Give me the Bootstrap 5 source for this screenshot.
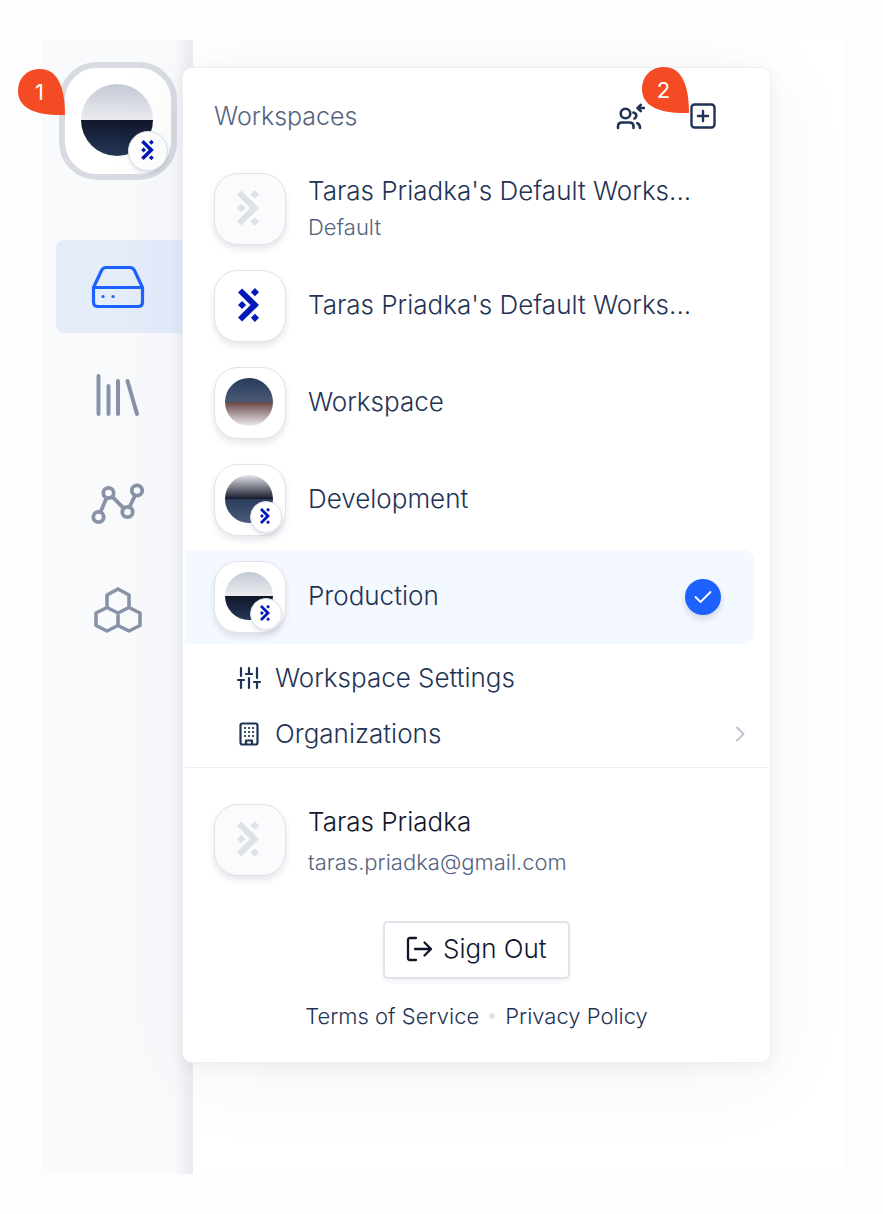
<!DOCTYPE html>
<html lang="en">
<head>
<meta charset="utf-8">
<meta name="viewport" content="width=device-width, initial-scale=1">
<title>Workspaces</title>
<link href="https://cdn.jsdelivr.net/npm/bootstrap@5.3.0/dist/css/bootstrap.min.css" rel="stylesheet">
<style>
  :root { --navy: #1f3354; --ink: #11152a; --slate: #55637f; --line: #e1e3ea; --blue: #1d62fe; --logo: #0519b8; }
  body { background: #fdfdfd; font-family: Inter, "Liberation Sans", sans-serif; color: var(--navy); font-size: 26px; line-height: 32px; font-weight: 300; }
  .stage { margin: 40px 38px 40px 42px; min-height: calc(100vh - 80px); background: #fff; overflow: hidden; }
  .rail { width: 151px; flex: none; background: linear-gradient(90deg, transparent 88%, #e9ebef), #f9fafc; padding: 22px 0 0 14px; }
  .rail-link { display: flex; align-items: center; height: 93px; padding-left: 32px; margin-bottom: 15px; color: #8993a7; border-radius: 8px 0 0 8px; }
  .rail-link.active { background: #e5edfb; color: var(--blue); }
  .current { width: 118px; height: 118px; margin: 0 0 60px 3px; padding: 0; border: 6px solid #d8dce2; border-radius: 38px; background: #fff; position: relative; display: flex; align-items: center; justify-content: center; }
  .pin { position: absolute; z-index: 3; width: 47px; height: 46px; padding-right: 4px; color: #fff; font-size: 22px; font-weight: 400; line-height: 46px; text-align: center; }
  .pin-shape { position: absolute; inset: 0; }
  .pin span { position: relative; }
  .pin-one { left: 18px; top: 69px; }
  .pin-two { right: 81px; top: -1px; }
  .menu { position: relative; z-index: 2; flex: 0 1 589px; min-width: 0; margin: 27px 0 110px -11px; align-self: flex-start; background: #fff; border: 1px solid #eceef1; border-radius: 10px; box-shadow: 0 12px 90px rgba(30,50,80,.06), 0 4px 16px rgba(30,50,80,.05); }
  .menu-head { height: 94px; padding: 2px 54px 0 31px; color: var(--slate); font-size: 25px; position: relative; }
  .icon-btn { background: none; border: 0; padding: 0; color: var(--navy); display: flex; }
  .icon-pair { gap: 45px; }
  .list { display: grid; gap: 3px; padding: 0 16px 0 2px; }
  .space { display: flex; align-items: center; gap: 22px; width: 100%; height: 94px; padding: 0 33px 0 29px; border: 0; background: none; color: inherit; font-weight: inherit; text-align: left; border-radius: 0 10px 10px 0; }
  .space.active { background: #f4f8ff; }
  .label { flex: 1; min-width: 0; padding-bottom: 2px; }
  .caption { font-size: 22px; line-height: 28px; color: var(--slate); }
  .two-line { display: grid; gap: 6px; }
  .tile { position: relative; flex: none; width: 72px; height: 72px; border: 1px solid var(--line); border-radius: 24px; background: #fff; box-shadow: 0 4px 6px rgba(40,55,90,.12); display: flex; align-items: center; justify-content: center; color: var(--logo); }
  .tile > svg { margin: 0 4px 2px 0; }
  .tile.blank { background: #fafbfd; color: #dee1e6; }
  .disc { width: 48px; height: 48px; border-radius: 50%; margin: 0 2px 2px 0; }
  .disc-big { width: 72px; height: 72px; }
  .disc-prod { background: linear-gradient(#c3c9d5, #ececf0 50%, #11172a 50%, #243757); }
  .disc-dev { background: linear-gradient(#e4e4e9, #141829 50%, #2a3d5d 50%, #4b5c7b); }
  .disc-work { background: linear-gradient(#283b5a, #4a5875 50%, #674642 50%, #eeedf2); }
  .mini { position: absolute; right: 3px; bottom: 2px; width: 32px; height: 32px; border: 1px solid var(--line); border-radius: 50%; background: #fff; color: var(--logo); display: flex; align-items: center; justify-content: center; box-shadow: 0 2px 4px rgba(40,55,90,.15); padding: 0 2px 2px 0; }
  .mini-big { width: 40px; height: 40px; bottom: 3px; }
  .tick { width: 36px; height: 36px; border-radius: 50%; background: var(--blue); color: #fff; display: flex; align-items: center; justify-content: center; box-shadow: 0 4px 6px rgba(30,50,80,.16); }
  .tools { padding: 6px 0 5px; border-bottom: 1px solid #ebedf0; margin: 0 2px; }
  .tool { display: flex; align-items: center; gap: 13px; height: 56px; padding: 0 22px 0 51px; color: var(--navy); text-decoration: none; }
  .profile { gap: 22px; padding: 36px 31px 0; color: var(--ink); }
  .profile-text { display: grid; gap: 10px; padding-top: 2px; }
  .signout { display: flex; align-items: center; gap: 10px; width: 187px; height: 58px; margin: 45px auto 21px; padding: 0 0 2px 20px; font-size: 26px; font-weight: inherit; line-height: 32px; color: var(--ink); background: #fff; border: 2px solid var(--line); border-radius: 5px; box-shadow: 0 3px 4px rgba(40,55,90,.06); }
  .legal { font-size: 22px; line-height: 32px; gap: 10px; padding-bottom: 30px; }
  .legal a { color: var(--navy); text-decoration: none; }
  .dot { width: 6px; height: 6px; border-radius: 50%; background: var(--line); }
  svg { flex: none; fill: none; stroke: currentColor; stroke-linecap: round; stroke-linejoin: round; }
  svg.solid { fill: currentColor; stroke: none; }
</style>
</head>
<body>
<svg width="0" height="0" class="position-absolute" aria-hidden="true">
  <symbol id="logo" viewBox="0 0 62 98"><path d="M0 12 12 0 62 49 12 98 0 86 37 49ZM50-1 62 11 50 23 38 11ZM12 37 24 49 12 61 0 49ZM50 75 62 87 50 99 38 87Z"/></symbol>
  <symbol id="pin" viewBox="0 0 47 46"><path d="M22 0C39 0 47 17 47 46C17 47 0 39 0 22C0 9 9 0 22 0Z"/></symbol>
</svg>

<div class="pin pin-one"><svg class="pin-shape solid" width="47" height="46" color="#f54b25"><use href="#pin"/></svg><span>1</span></div>
<div class="stage d-flex">
  <nav class="rail" aria-label="Main">
    <button class="current" type="button" aria-label="Current workspace">
      <span class="disc disc-big disc-prod"></span>
      <span class="mini mini-big"><svg class="solid" width="13" height="20"><use href="#logo"/></svg></span>
    </button>
    <a class="rail-link active" href="#" aria-label="Storage"><svg width="60" height="48" viewBox="0 0 60 48" stroke-width="3.200"><path d="M5.500 24.500 13.500 7.500Q15 4.500 18 4.500H42Q45 4.500 46.500 7.500L54.500 24.500V39Q54.500 43.500 50 43.500H10Q5.500 43.500 5.500 39ZM5.500 24.500H54.500"/><path d="M15 33.500H15.100M25 33.500H25.100"/></svg></a>
    <a class="rail-link" href="#" aria-label="Library"><svg width="60" height="48" viewBox="0 0 60 48" stroke-width="4"><path d="M10.500 5V43M20.500 15V43M30 10V43M39.500 10 49 43"/></svg></a>
    <a class="rail-link" href="#" aria-label="Graph"><svg width="60" height="48" viewBox="0 0 60 48" stroke-width="3.800"><circle cx="10.500" cy="38" r="5.200"/><circle cx="20.500" cy="14" r="5.200"/><circle cx="39.500" cy="33" r="5.200"/><circle cx="49" cy="11.500" r="5.200"/><path d="M12.500 33 18.500 19M24.200 17.700 35.800 29.300M41.500 28 47 16.500"/></svg></a>
    <a class="rail-link" href="#" aria-label="Clusters"><svg width="60" height="48" viewBox="0 0 60 48" stroke-width="3.600"><path d="M30 2 41 8V20.500L30 26 19 20.500V8ZM19 20.500 30 26V38.500L19 44 8 38.500V26ZM41 20.500 52 26V38.500L41 44 30 38.500V26Z"/></svg></a>
  </nav>

  <section class="menu" aria-label="Workspaces">
    <header class="menu-head d-flex align-items-center">
      <span class="me-auto">Workspaces</span>
      <div class="icon-pair d-flex align-items-center">
        <button class="icon-btn" type="button" aria-label="Join workspace"><svg width="30" height="30" viewBox="0 0 30 30" stroke-width="2.600"><circle cx="10.500" cy="12.500" r="4.800"/><path d="M3 27V25.500Q3 21.500 7 21.500H14.500Q18.500 21.500 18.500 25.500V27M18.500 11.500Q21.500 12.500 21.300 15Q21.200 16.800 19.500 17.500M22.300 22.200Q25 23.500 25 27M23 7H29M25.800 3.800 22.600 7 25.800 10.200"/></svg></button>
        <button class="icon-btn" type="button" aria-label="Add workspace"><svg width="26" height="26" viewBox="0 0 26 26" stroke-width="2.400"><rect x="1.500" y="1.500" width="23" height="23" rx="3"/><path d="M13 8V18M8 13H18"/></svg></button>
      </div>
      <div class="pin pin-two"><svg class="pin-shape solid" width="47" height="46" color="#f54b25"><use href="#pin"/></svg><span>2</span></div>
    </header>

    <div class="list">
      <button class="space" type="button"><span class="tile blank"><svg class="solid" width="22" height="36"><use href="#logo"/></svg></span><span class="label two-line"><span class="text-truncate">Taras Priadka's Default Works...</span><span class="caption">Default</span></span></button>
      <button class="space" type="button"><span class="tile"><svg class="solid" width="21" height="34"><use href="#logo"/></svg></span><span class="label text-truncate">Taras Priadka's Default Works...</span></button>
      <button class="space" type="button"><span class="tile"><span class="disc disc-work"></span></span><span class="label">Workspace</span></button>
      <button class="space" type="button"><span class="tile"><span class="disc disc-dev"></span><span class="mini"><svg class="solid" width="10" height="16"><use href="#logo"/></svg></span></span><span class="label">Development</span></button>
      <button class="space active" type="button"><span class="tile"><span class="disc disc-prod"></span><span class="mini"><svg class="solid" width="10" height="16"><use href="#logo"/></svg></span></span><span class="label">Production</span><span class="tick"><svg width="18" height="14" viewBox="0 0 18 14" stroke-width="1.800"><path d="M1.500 7 6.500 12 16.500 2"/></svg></span></button>
    </div>

    <div class="tools">
      <a class="tool" href="#"><svg width="26" height="24" viewBox="0 0 26 24" stroke-width="2.200"><path d="M5 2V10M5 14V22M2 14H8M13 2V8M10 8H16M13 12V22M21 2V12M21 16V22M18 16H24"/></svg>Workspace Settings</a>
      <a class="tool" href="#"><svg width="26" height="24" viewBox="0 0 26 24" stroke-width="2.200"><rect x="4.500" y="1.500" width="17" height="21" rx="2"/><path d="M10 22V18.500H16V22"/><path d="M9 6H9.100M13 6H13.100M17 6H17.100M9 10H9.100M13 10H13.100M17 10H17.100M9 14H9.100M13 14H13.100M17 14H17.100"/></svg><span class="me-auto">Organizations</span><svg width="12" height="16" viewBox="0 0 12 16" color="#bdc3cf" stroke-width="2"><path d="M3 1.500 9.500 8 3 14.500"/></svg></a>
    </div>

    <div class="profile d-flex align-items-center">
      <span class="tile blank"><svg class="solid" width="22" height="36"><use href="#logo"/></svg></span>
      <div class="profile-text"><span>Taras Priadka</span><span class="caption">taras.priadka@gmail.com</span></div>
    </div>
    <button class="signout" type="button"><svg width="28" height="26" viewBox="0 0 28 26" stroke-width="2.300"><path d="M11 2H5Q3 2 3 4V22Q3 24 5 24H11M10 13H26M19.500 6.500 26 13 19.500 19.500"/></svg>Sign Out</button>
    <div class="legal d-flex align-items-center justify-content-center"><a href="#">Terms of Service</a><span class="dot"></span><a href="#">Privacy Policy</a></div>
  </section>
</div>
<script src="https://cdn.jsdelivr.net/npm/bootstrap@5.3.0/dist/js/bootstrap.bundle.min.js"></script>
</body>
</html>
